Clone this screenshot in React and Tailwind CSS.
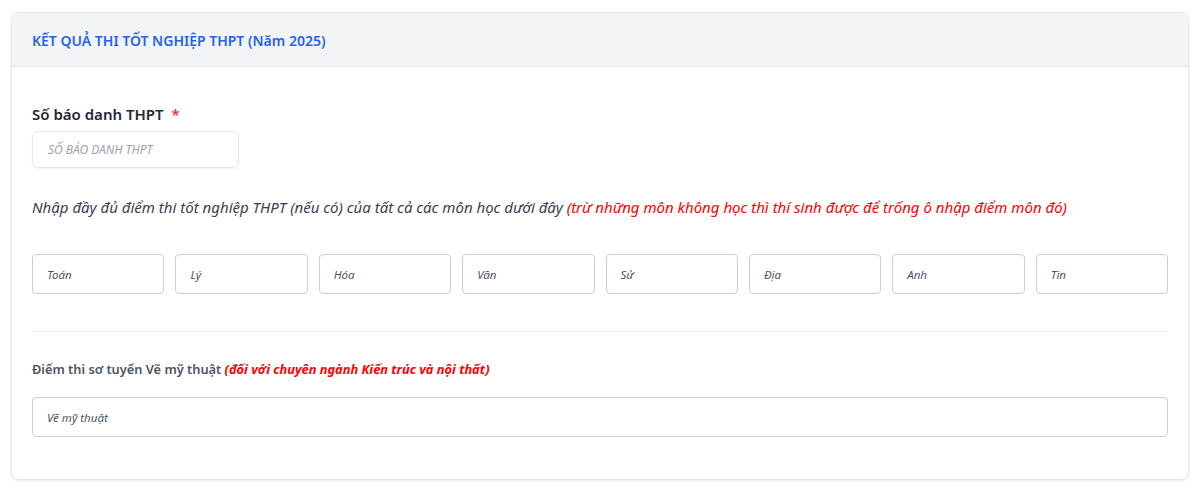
import React from "react"

const subjects = ["Toán", "Lý", "Hóa", "Văn", "Sử", "Địa", "Anh", "Tin"]

export default function App() {
  return (
    <div className="min-h-screen bg-white pt-3 px-[11px] font-['Noto_Sans','Open_Sans',sans-serif]">
      <div className="w-[1178px] rounded-lg border border-[#e5e7eb] shadow-[0_1px_3px_rgba(0,0,0,0.08)] bg-white overflow-hidden">
        <div className="h-[54px] bg-[#f3f4f6] border-b border-[#e5e7eb] flex items-center px-5 pt-[2px]">
          <h2 className="text-[14px] font-semibold text-[#2563eb]">KẾT QUẢ THI TỐT NGHIỆP THPT (Năm 2025)</h2>
        </div>

        <div className="px-5 pt-[37px] pb-[42px]">
          <label className="block text-[15px] font-semibold text-[#1f2937] leading-5">
            Số báo danh THPT <span className="text-red-500 ml-1">*</span>
          </label>
          <input
            className="mt-[7px] w-[207px] h-[37px] rounded-md border border-[#e5e7eb] shadow-[0_1px_2px_rgba(0,0,0,0.05)] px-[15px] text-[12px] italic placeholder:text-[#9ca3af] outline-none"
            placeholder="SỐ BÁO DANH THPT"
          />

          <p className="mt-[29px] text-[15px] italic text-[#374151] leading-5">
            Nhập đầy đủ điểm thi tốt nghiệp THPT (nếu có) của tất cả các môn học dưới đây{" "}
            <span className="text-[#ff0000]">(trừ những môn không học thì thí sinh được để trống ô nhập điểm môn đó)</span>
          </p>

          <div className="mt-[37px] grid grid-cols-8 gap-[11px]">
            {subjects.map((s) => (
              <input
                key={s}
                className="h-10 rounded border border-[#cfcfcf] px-[14px] text-[11.5px] italic placeholder:text-[#4b5563] outline-none"
                placeholder={s}
              />
            ))}
          </div>

          <div className="mt-[37px] border-t border-[#eeeeee]" />

          <p className="mt-[27px] text-[12.8px] font-semibold text-[#4b5563] leading-5">
            Điểm thi sơ tuyển Vẽ mỹ thuật{" "}
            <span className="italic font-bold text-[#ff0000]">(đối với chuyên ngành Kiến trúc và nội thất)</span>
          </p>

          <input
            className="mt-[18px] w-full h-10 rounded border border-[#cfcfcf] px-[14px] text-[11.5px] italic placeholder:text-[#4b5563] outline-none"
            placeholder="Vẽ mỹ thuật"
          />
        </div>
      </div>
    </div>
  )
}
